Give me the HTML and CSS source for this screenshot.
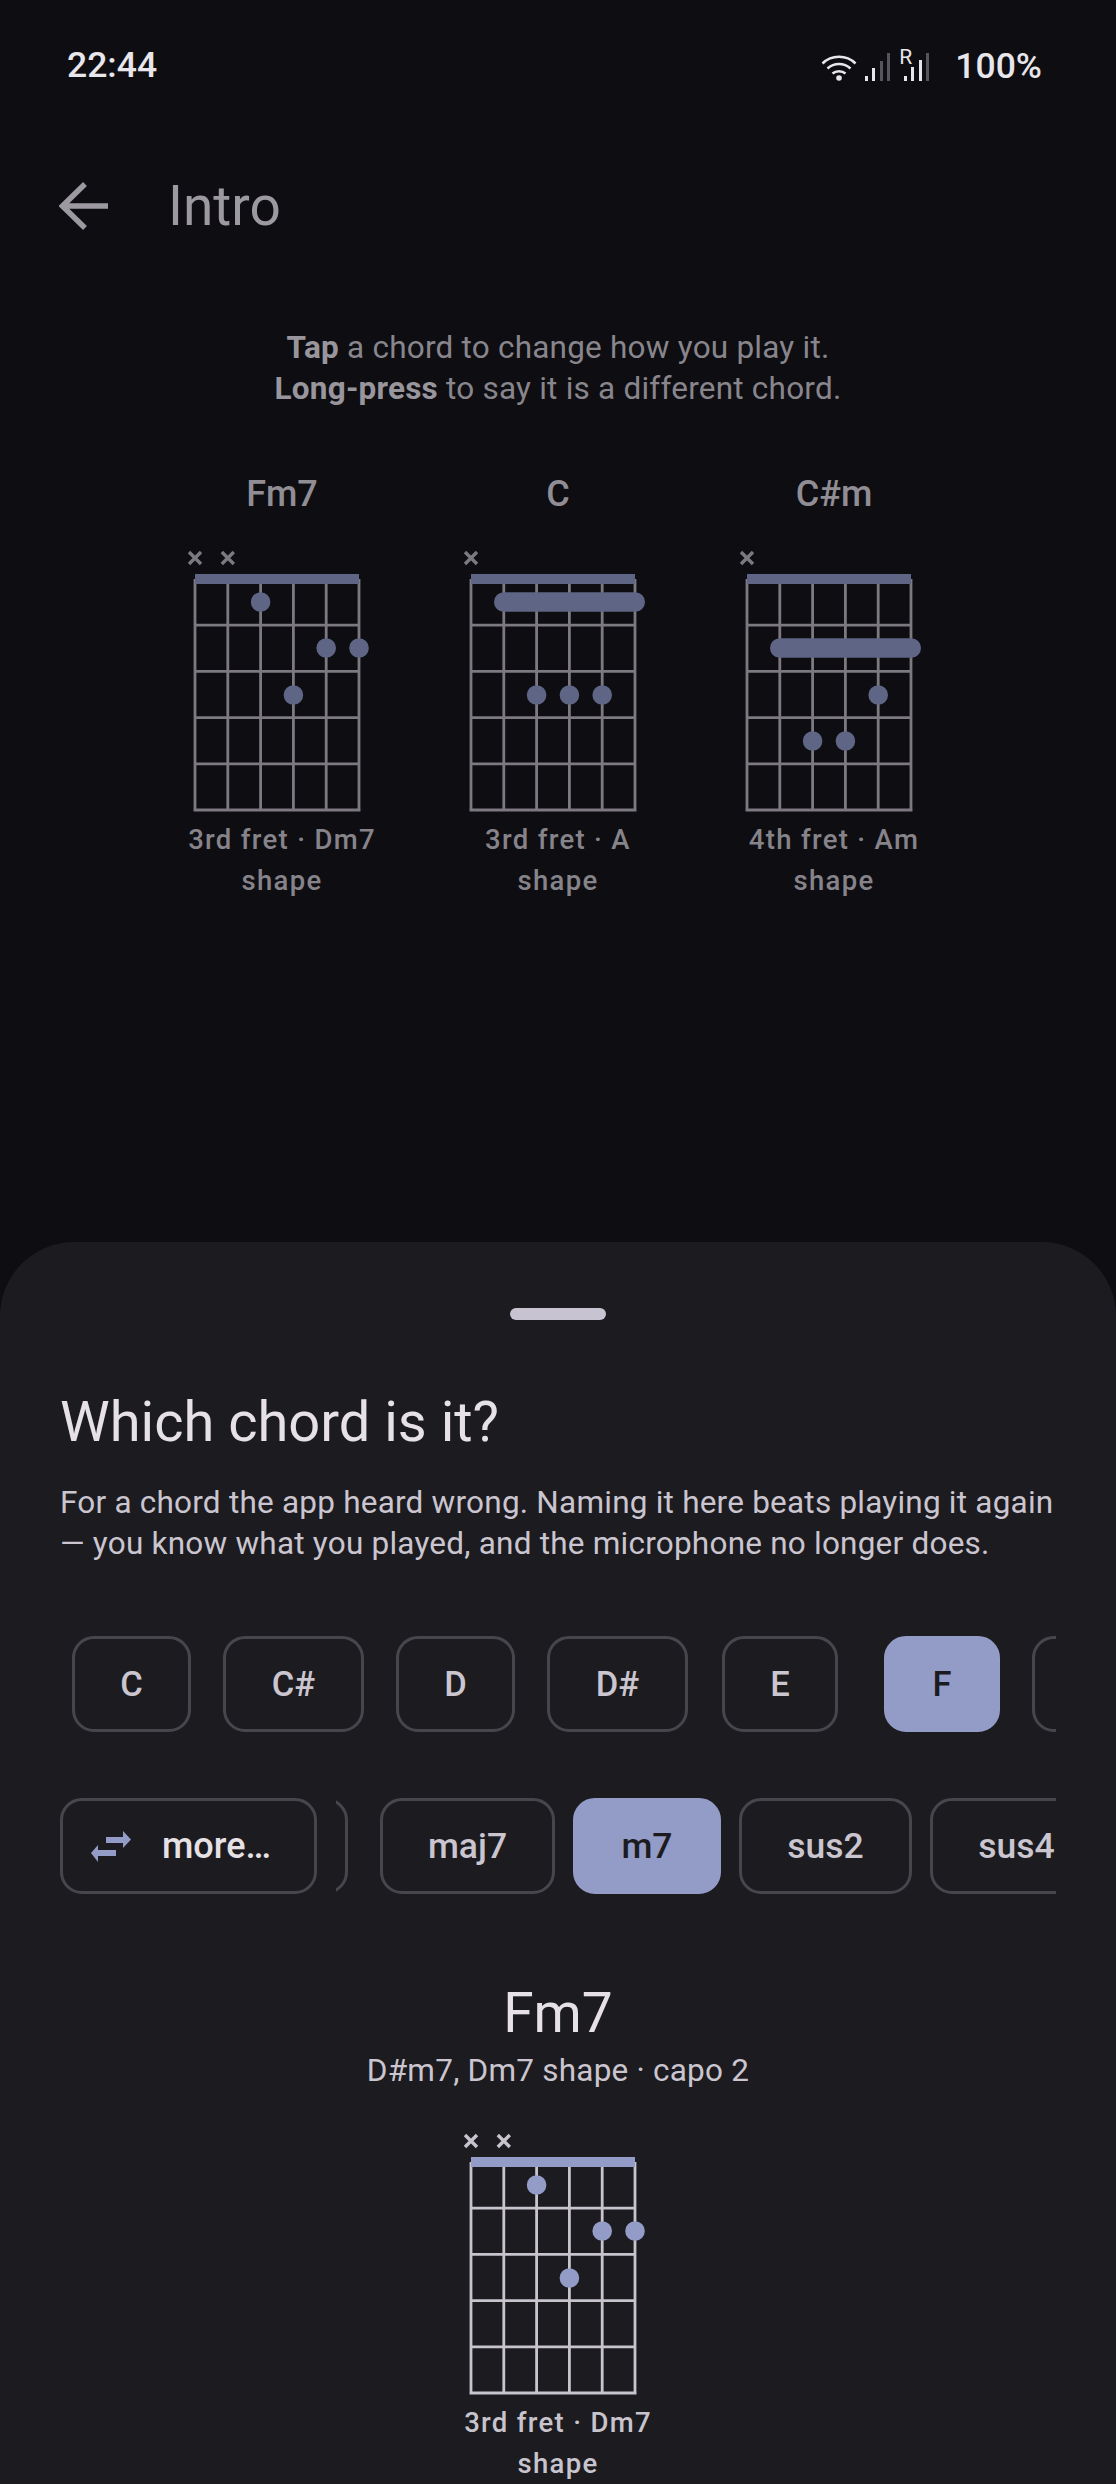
FILE: index.html
```html
<!DOCTYPE html>
<html lang="en">
<head>
    <meta charset="UTF-8">
    <meta name="viewport" content="width=device-width, initial-scale=1.0">
    <title>Intro</title>
    <link rel="stylesheet" href="styles.css">
</head>
<body>
    <svg class="sprite">
        <symbol id="grid" viewBox="0 0 210 270">
            <path d="M18 33V265.500M50.800 33V264M83.600 33V264M116.400 33V264M149.200 33V264M182 33V265.500M18 79.200H182M18 125.400H182M18 171.600H182M18 217.800H182M16.500 264H183.500" fill="none" stroke="currentColor" stroke-width="2.800"/>
        </symbol>
        <symbol id="mute" viewBox="0 0 16 16">
            <path d="M2 2L14 14M14 2L2 14" fill="none" stroke="currentColor" stroke-width="3.400"/>
        </symbol>
    </svg>

    <div class="status-bar">
        <span class="clock">22:44</span>
        <div class="status-icons">
            <svg class="wifi" width="36" height="27" viewBox="0 0 36 27">
                <path d="M1.500 9.500C10.500 .5 25.500 .5 34.500 9.500M6.500 14.500C13 8.500 23 8.500 29.500 14.500M11.500 19.500C15 16.500 21 16.500 24.500 19.500" fill="none" stroke="currentColor" stroke-width="2.600"/>
                <circle cx="18" cy="24" r="2.800" fill="currentColor"/>
            </svg>
            <svg class="signal" width="25" height="28" viewBox="0 0 25 28">
                <rect x="0" y="23" width="3" height="5" fill="#e8e6ea"/>
                <rect x="7" y="15" width="3" height="13" fill="#e8e6ea"/>
                <rect x="15" y="8" width="3" height="20" fill="#56555b"/>
                <rect x="22" y="0" width="3" height="28" fill="#56555b"/>
            </svg>
            <div class="roaming">
                <span class="roaming-r">R</span>
                <svg class="signal" width="25" height="28" viewBox="0 0 25 28">
                    <rect x="0" y="23" width="3" height="5" fill="#e8e6ea"/>
                    <rect x="7" y="14" width="3" height="14" fill="#e8e6ea"/>
                    <rect x="15" y="7" width="3" height="21" fill="#e8e6ea"/>
                    <rect x="22" y="0" width="3" height="28" fill="#56555b"/>
                </svg>
            </div>
            <span class="battery">100%</span>
        </div>
    </div>

    <header class="app-bar">
        <svg class="back" width="50" height="48" viewBox="0 0 50 48">
            <path d="M49 24H5M26 2L3.500 24L26 46" fill="none" stroke="currentColor" stroke-width="5.500"/>
        </svg>
        <h1>Intro</h1>
    </header>

    <p class="hint"><b>Tap</b> a chord to change how you play it.<br><b>Long-press</b> to say it is a different chord.</p>

    <div class="chords">
        <div class="chord">
            <div class="chord-name">Fm7</div>
            <svg class="diagram" viewBox="0 0 210 270">
                <use href="#grid" width="210" height="270"/>
                <use href="#mute" x="10" y="4" width="16" height="16"/>
                <use href="#mute" x="42.800" y="4" width="16" height="16"/>
                <rect class="mark" x="18" y="28" width="164" height="10"/>
                <circle class="mark" cx="83.600" cy="56" r="9.800"/>
                <circle class="mark" cx="149.200" cy="102" r="9.800"/>
                <circle class="mark" cx="182" cy="102" r="9.800"/>
                <circle class="mark" cx="116.400" cy="149" r="9.800"/>
            </svg>
            <div class="chord-label">3rd fret · Dm7 shape</div>
        </div>
        <div class="chord">
            <div class="chord-name">C</div>
            <svg class="diagram" viewBox="0 0 210 270">
                <use href="#grid" width="210" height="270"/>
                <use href="#mute" x="10" y="4" width="16" height="16"/>
                <rect class="mark" x="18" y="28" width="164" height="10"/>
                <rect class="mark" x="41" y="46.200" width="151" height="19.600" rx="9.800"/>
                <circle class="mark" cx="83.600" cy="149" r="9.800"/>
                <circle class="mark" cx="116.400" cy="149" r="9.800"/>
                <circle class="mark" cx="149.200" cy="149" r="9.800"/>
            </svg>
            <div class="chord-label">3rd fret · A shape</div>
        </div>
        <div class="chord">
            <div class="chord-name">C#m</div>
            <svg class="diagram" viewBox="0 0 210 270">
                <use href="#grid" width="210" height="270"/>
                <use href="#mute" x="10" y="4" width="16" height="16"/>
                <rect class="mark" x="18" y="28" width="164" height="10"/>
                <rect class="mark" x="41" y="92.200" width="151" height="19.600" rx="9.800"/>
                <circle class="mark" cx="149.200" cy="149" r="9.800"/>
                <circle class="mark" cx="83.600" cy="195" r="9.800"/>
                <circle class="mark" cx="116.400" cy="195" r="9.800"/>
            </svg>
            <div class="chord-label">4th fret · Am shape</div>
        </div>
    </div>

    <section class="sheet">
        <div class="handle"></div>
        <h2>Which chord is it?</h2>
        <p class="sheet-text">For a chord the app heard wrong. Naming it here beats playing it again — you know what you played, and the microphone no longer does.</p>

        <div class="roots">
            <button class="chip chip-c">C</button>
            <button class="chip chip-sharp">C#</button>
            <button class="chip chip-c">D</button>
            <button class="chip chip-sharp">D#</button>
            <button class="chip chip-e">E</button>
            <button class="chip chip-e selected">F</button>
            <button class="chip chip-c"></button>
        </div>

        <div class="qualities">
            <button class="chip more">
                <svg width="40" height="32" viewBox="0 0 40 32">
                    <path d="M15 7H32V1L40 9.500L32 18V13H15ZM25 20H7V15L0 23L7 32V26H25Z" fill="#939cc7"/>
                </svg>
                more…
            </button>
            <div class="quality-scroll">
                <button class="chip chip-hidden"></button>
                <button class="chip chip-maj">maj7</button>
                <button class="chip chip-m selected">m7</button>
                <button class="chip chip-sus">sus2</button>
                <button class="chip chip-sus">sus4</button>
            </div>
        </div>

        <div class="picked">
            <div class="picked-name">Fm7</div>
            <div class="picked-sub">D#m7, Dm7 shape · capo 2</div>
            <div class="chord bright">
                <svg class="diagram" viewBox="0 0 210 270">
                    <use href="#grid" width="210" height="270"/>
                    <use href="#mute" x="10" y="4" width="16" height="16"/>
                    <use href="#mute" x="42.800" y="4" width="16" height="16"/>
                    <rect class="mark" x="18" y="28" width="164" height="10"/>
                    <circle class="mark" cx="83.600" cy="56" r="9.800"/>
                    <circle class="mark" cx="149.200" cy="102" r="9.800"/>
                    <circle class="mark" cx="182" cy="102" r="9.800"/>
                    <circle class="mark" cx="116.400" cy="149" r="9.800"/>
                </svg>
                <div class="chord-label">3rd fret · Dm7 shape</div>
            </div>
        </div>
    </section>
</body>
</html>
```

FILE: styles.css
```css
* {
    box-sizing: border-box;
}
html, body {
    margin: 0;
    height: 2484px;
    overflow: hidden;
}
body {
    display: flex;
    flex-direction: column;
    background: #0e0d12;
    color: #e6e1e5;
    font-family: Roboto, "Noto Sans", sans-serif;
}
.sprite {
    display: none;
}

/* status bar */
.status-bar {
    display: flex;
    justify-content: space-between;
    align-items: center;
    height: 130px;
    padding: 0 74px 0 67px;
    font-size: 35.500px;
    font-weight: 500;
    color: #e8e6ea;
}
.status-icons {
    display: flex;
    align-items: flex-end;
    height: 32px;
}
.wifi {
    margin-right: 8px;
}
.roaming {
    display: flex;
    align-items: flex-end;
    margin-left: 14px;
    position: relative;
}
.roaming-r {
    position: absolute;
    left: -5px;
    top: -8px;
    font-size: 21px;
    font-weight: 400;
}
.battery {
    margin-left: 26px;
    line-height: 30px;
}

/* app bar */
.app-bar {
    display: flex;
    align-items: center;
    height: 92px;
    margin-top: 30px;
    padding-left: 59px;
    color: #9c9aa0;
}
.app-bar h1 {
    margin: 0 0 0 59px;
    font-size: 55px;
    font-weight: 400;
}

.hint {
    margin: 75px 0 0;
    text-align: center;
    font-size: 31.500px;
    line-height: 41px;
    letter-spacing: 0.220px;
    color: #88868c;
}
.hint b {
    font-weight: 700;
    color: #98969c;
}

/* chord diagrams */
.chords {
    display: flex;
    justify-content: center;
    gap: 66px;
    margin-top: 65px;
}
.chord {
    display: flex;
    flex-direction: column;
    align-items: center;
    width: 210px;
    color: #7c7a80;
    --mark: #5f6585;
}
.chord.bright {
    color: #c8c4cd;
    --mark: #939cc7;
}
.chord-name {
    font-size: 36px;
    font-weight: 500;
    line-height: 40px;
    margin-bottom: 32px;
    color: #908e94;
}
.diagram {
    display: block;
    width: 210px;
    height: 270px;
}
.mark {
    fill: var(--mark);
}
.chord-label {
    margin-top: 3px;
    text-align: center;
    font-size: 27.500px;
    font-weight: 500;
    line-height: 41px;
    letter-spacing: 1.300px;
    color: #86848a;
}
.bright .chord-label {
    color: #c8c4cd;
}

/* bottom sheet */
.sheet {
    margin-top: auto;
    height: 1242px;
    padding: 66px 60px 0;
    background: #1c1b20;
    border-radius: 74px 74px 0 0;
}
.handle {
    width: 96px;
    height: 12px;
    margin: 0 auto;
    border-radius: 6px;
    background: #c8c3d0;
}
.sheet h2 {
    margin: 66px 0 0;
    font-size: 56px;
    font-weight: 400;
    line-height: 72px;
}
.sheet-text {
    margin: 24px 0 0;
    font-size: 31.500px;
    line-height: 41px;
    letter-spacing: 0.220px;
    color: #cac5cf;
}

/* chips */
.chip {
    flex: none;
    height: 96px;
    padding: 0;
    border: 3px solid #47464d;
    border-radius: 22px;
    background: transparent;
    font-family: inherit;
    font-size: 34.500px;
    font-weight: 500;
    color: #cac5cf;
}
.chip.selected {
    border-color: #939cc7;
    background: #939cc7;
    color: #1c1b20;
}
.roots {
    display: flex;
    gap: 32px;
    margin-top: 72px;
    padding-left: 12px;
    overflow: hidden;
}
.chip-c {
    width: 119px;
}
.chip-sharp {
    width: 141px;
}
.chip-e {
    width: 116px;
}
.chip-sharp + .chip-e {
    margin-left: 2px;
}
.chip-e.selected {
    margin-left: 14px;
}
.qualities {
    display: flex;
    gap: 19px;
    margin-top: 66px;
}
.more {
    display: flex;
    align-items: center;
    gap: 31px;
    width: 257px;
    padding-left: 28px;
    font-size: 36px;
    color: #e6e1e5;
}
.quality-scroll {
    display: flex;
    flex: 1;
    gap: 18px;
    min-width: 0;
    overflow: hidden;
}
.quality-scroll .chip {
    font-size: 35.500px;
}
.chip-hidden {
    width: 100px;
    margin: 0 14px 0 -88px;
}
.chip-maj {
    width: 175px;
}
.chip-m {
    width: 148px;
}
.chip-sus {
    width: 173px;
}

/* picked chord */
.picked {
    display: flex;
    flex-direction: column;
    align-items: center;
    margin-top: 83px;
}
.picked-name {
    font-size: 55px;
    line-height: 72px;
}
.picked-sub {
    margin-top: 2px;
    font-size: 31.500px;
    line-height: 40px;
    letter-spacing: 0.220px;
    color: #cac5cf;
}
.picked .diagram {
    margin-top: 38px;
}
```
